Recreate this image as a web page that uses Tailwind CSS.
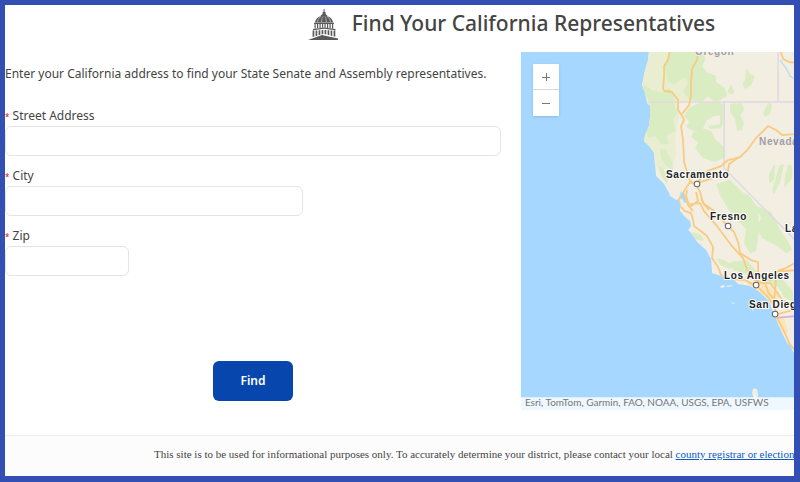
<!DOCTYPE html>
<html lang="en">
  <head>
    <meta charset="UTF-8" />
    <meta name="viewport" content="width=device-width, initial-scale=1.0" />
    <title>Find Your California Representatives</title>
    <script src="https://cdn.jsdelivr.net/npm/@tailwindcss/browser@4"></script>
  </head>
  <body
    class="flex min-h-screen flex-col overflow-hidden border-t-5 border-r-6 border-b-6 border-l-5 border-[#344fb3] bg-white font-['Noto_Sans','Open_Sans',sans-serif] text-[#444]"
  >
    <header class="flex items-center justify-center gap-3 pb-1 pl-56">
      <svg class="mt-1 h-8 w-8" viewBox="0 0 32 32" fill="#5a5a5a" aria-hidden="true">
        <path d="M15.6 0h1v3h-1zM14.6 3h3v3h-3z" />
        <path d="M12.500 7c.6-1.300 2-2 3.500-2s2.900.7 3.500 2z" />
        <path d="M7 13.500C7.500 9.500 11.300 6.800 16 6.800s8.500 2.700 9 6.700z" />
        <path d="M6 13.700h20v1.300H6zM5 20l11-1.500L27.500 20v1.200L16 19.800 5 21.200z" />
        <path d="M6.500 15h1.200v4.400H6.500zM9 15h1.200v4.200H9zM11.500 15h1.200v4h-1.200zM14 15h1.200v3.800H14zM16.500 15h1.200v3.800h-1.200zM19 15h1.200v4H19zM21.500 15h1.200v4.200h-1.200zM24 15h1.200v4.400H24z" />
        <path d="M4.600 21.600h1.700v6l-1.700.5zM7.600 21.400h1.700v5.400l-1.700.5zM10.600 21.200h1.700v4.600l-1.700.5zM13.600 21h1.700v4l-1.700.4zM16.600 21h1.700v4.500l-1.700-.4zM19.600 21.200h1.700v5l-1.700-.5zM22.600 21.400h1.700v5.600l-1.700-.5zM25.600 21.600h1.700v6.200l-1.700-.5z" />
        <path d="M0 31L14 26l16 3.500V31z" />
        <path d="M9.500 13c.4-2.500 1.400-4.500 3.500-5.600M13.500 13c0-2.500.7-4.500 1.700-5.600M18.300 13c0-2.500-.4-4.500-1.300-5.600M22.500 13c-.5-2.500-1.500-4.500-3.500-5.600" fill="none" stroke="#ccc" stroke-width=".7" />
      </svg>
      <h1 class="text-[21px] leading-9 font-medium whitespace-nowrap">Find Your California Representatives</h1>
    </header>

    <main class="mt-[7px] grid grid-cols-[17fr_9fr]">
      <form class="flex min-w-0 flex-col pr-5 text-xs leading-5">
        <p class="mt-3 mb-[22px] whitespace-nowrap">
          Enter your California address to find your State Senate and Assembly representatives.
        </p>
        <label for="street"><span class="text-[8px] leading-none text-red-600">*</span> Street Address</label>
        <input id="street" type="text" required class="mb-2.5 h-[30px] w-full rounded-md border border-[#e4e4e4] px-2" />
        <label for="city"><span class="text-[8px] leading-none text-red-600">*</span> City</label>
        <input id="city" type="text" required class="mb-2.5 h-[30px] w-3/5 rounded-md border border-[#e4e4e4] px-2" />
        <label for="zip"><span class="text-[8px] leading-none text-red-600">*</span> Zip</label>
        <input id="zip" type="text" required class="h-[30px] w-1/4 rounded-md border border-[#e4e4e4] px-2" />
        <button type="submit" class="mt-[85px] h-10 w-20 self-center rounded-md bg-[#0747ad] text-xs font-semibold text-white">
          Find
        </button>
      </form>

      <section class="relative h-[358px] min-w-0 overflow-hidden bg-[#a6d7ff]" aria-label="Map of California">
        <svg class="h-full w-full" viewBox="521 52 273 358" preserveAspectRatio="xMinYMin slice" fill="none">
          <defs>
            <clipPath id="land">
              <path id="coast" d="M649 50L648 60 645 70 643 80 642 85 645 93 647 103 650 106 650 117 649 126 645 135 644 141 650 147 654 153 655 165 656 176 664 184 669 193 670 196 676 200 679 199 680 204 680 211 685 217 690 221 691 226 688 230 692 234 697 242 706 250 711 259 712 273 721 276 732 278 738 284 750 286 757 290 765 297 770 303 772 310 775 315 777 322 783 335 787 343 791 347 793 352 796 354V50z" />
            </clipPath>
          </defs>
          <use href="#coast" fill="#f3eee2" />
          <g clip-path="url(#land)">
            <path d="M640 50h57l-5 20-3 32-13 2 3 12-4 20 1 20-6 14-18-4-12-30 4-20z" fill="#e9eed0" />
            <g fill="#daecc2">
              <path d="M671 50h32l2 10-3 6 4 6 10 4 0 6 9 6 2 8-7 4-6 2-6-6-6 6-12-2-7-8 5-10-4-4-10 6-6-2-4-18z" />
              <path d="M643 84l8 6 10 2 8-4 6 8-2 7-22 0-6-8z" />
              <path d="M650 103h24l4 10-5 6 2 12-9 5 3 8-8 0-6-8-7 2-2-8 4-10z" />
              <path d="M689 108l10-5h22l2 12-9 1-7 4-5 10-8 1-8-4 3-5-5-6z" />
              <path d="M720 104h3v20l-3 4zM708 126l12-2 2 4-12 1z" />
              <path d="M693 132l8-4 10 3 4 8 9 8 1 10-10 5-12-4-8-10 3-5-7-6z" />
              <path d="M660 148l6 2 6 12 1 8-6-3-6-9z" />
              <path d="M716 184l14-4 12 12 8 4 8 13 1 22-3 20-6 2-6-10 2-14-8-8-10-12-8-14z" />
              <path d="M754 205l17 7 8 16 8 12 5 10-6 3-11-8-13-7-5-10 4-10z" />
              <path d="M658 166l5 2 5 10-1 6-6-8z" />
              <path d="M692 232l8 2 4 6-2 1-7-2zM716 258l8 2 10 6-4 3-10-4z" />
              <path d="M730 262l17-2 8 10 12 8-8 2-14-6-12-4z" />
              <path d="M761 275l13-1 11 8 7 8 2 12-9-4-7-11-15-6z" />
              <path d="M730 104l12-1 2 7-4 5 4 8-2 7-5 1-2-12-5-7z" />
              <path d="M768 103l4 2-2 9-5 3-2-4zM746 68l4 6 5 2-4 9-6 4-3-5 3-4zM731 84l3 7-1 3-6-1z" />
              <path d="M772 168l3-4-1 16-5 4 0-10zM779 166l5-2-4 18-6 12-2-3zM788 164l4 2v12l-8 10 1-12z" />
            </g>
            <path d="M748 283l13-3 9 8 9 8-3 9-9-6-8-7-9-3zM775 316l9 2 4 14-5 3z" fill="#fae6b8" />
            <g stroke="#dfd9e2" stroke-width="1.500">
              <path d="M648 102H796M778 50V102M724 102V168L796 241" />
              <path d="M775 318L796 316" stroke="#d9b5dc" stroke-width="2" />
            </g>
            <path d="M780 60L787 70 790 76 796 80" stroke="#bfe0e8" stroke-width="1.500" />
            <g stroke="#f8cb83" stroke-width="1.800" stroke-linejoin="round">
              <path d="M670 50L668 60 664 66 664 77 663 89 665 91 672 92 678 100 678 110 682 116 684 120 681 126 683 140 684 162 687 172 690 181 696 184 700 192 703 203 714 211 724 222 734 232 738 242 740 253 751 260 758 262 758 288" />
              <path d="M698 50L697 60 692 69 691 83 691 95 689 105 682 114" />
              <path d="M696 184L707 171 721 166 728 160 740 157 748 149 756 138 768 126 776 130 782 135 796 134" />
              <path d="M700 182L713 178 727 175 729 164 739 157" />
              <path d="M697 185L690 182 684 191 679 199 680 206 685 211 691 213 693 220 694 226 707 236 713 247 712 258 718 267 721 275 731 279 745 280 756 286" />
              <path d="M687 190L686 196 688 202 691 206 698 201 696 192M691 204L700 203 704 211 716 225 731 245 743 258 747 270 756 276" />
              <path d="M681 199L684 194 688 205 693 211M701 198L704 204 709 210" />
              <path d="M756 276L771 280 777 271 786 268 796 262M775 271L783 271 796 270" />
              <path d="M751 278L762 283 770 283 776 291 782 300 796 307M758 287L767 296 774 306 778 320 784 331 789 343 796 352" />
              <path d="M776 274L775 292 773 304M765 282L768 292 776 302M778 314L796 309" />
              <path d="M780 50L783 59 789 62 796 63" />
            </g>
          </g>
          <path d="M680 193l3-1 3 10-2 1z" fill="#a6d7ff" />
          <g fill="#f4efe1">
            <path d="M720 286l4-1 1 2-4 1zM726 286l6-1v1l-5 1zM731 302l4 1-2 1zM751 299l4 4-3-1zM751 306l3 6-2-2zM753 388l4 1 1 6-1 4h-3l-2-6z" />
          </g>
          <path d="M521 397h273v13h-273z" fill="#fff" fill-opacity=".82" />
          <g
            class="font-['Liberation_Sans',Arial,sans-serif]"
            font-size="10"
            font-weight="700"
            fill="#222"
            stroke="#fff"
            stroke-width="2"
            stroke-linejoin="round"
            paint-order="stroke"
            letter-spacing=".6"
          >
            <text x="666" y="178">Sacramento</text>
            <text x="710" y="220">Fresno</text>
            <text x="785" y="232">Las Vegas</text>
            <text x="724" y="279">Los Angeles</text>
            <text x="749" y="308">San Diego</text>
            <g fill="#a39da8" stroke="#f3eee2">
              <text x="695" y="55">Oregon</text>
              <text x="759" y="145">Nevada</text>
            </g>
          </g>
          <g fill="#fff" stroke="#666" stroke-width="1">
            <circle cx="697" cy="184" r="2.800" />
            <circle cx="728" cy="226" r="2.800" />
            <circle cx="756" cy="285" r="2.800" />
            <circle cx="775" cy="314" r="2.800" />
          </g>
        </svg>
        <div class="absolute top-3 left-3 flex w-[26px] flex-col divide-y divide-gray-300 bg-white shadow">
          <button type="button" aria-label="Zoom in" class="flex h-[26px] items-center justify-center">
            <svg class="h-4 w-4" viewBox="0 0 16 16" stroke="#777"><path d="M4 8.500h8M8.500 4v8" /></svg>
          </button>
          <button type="button" aria-label="Zoom out" class="flex h-[26px] items-center justify-center">
            <svg class="h-4 w-4" viewBox="0 0 16 16" stroke="#777"><path d="M4 8.500h8" /></svg>
          </button>
        </div>
        <p class="absolute bottom-0.5 left-1 font-['Lato',sans-serif] text-[10px] leading-3 whitespace-nowrap text-[#777]">
          Esri, TomTom, Garmin, FAO, NOAA, USGS, EPA, USFWS
        </p>
      </section>
    </main>

    <footer
      class="mt-[25px] grow overflow-hidden border-t border-[#ececec] bg-[#fcfcfc] pt-2.5 pl-[149px] font-['Liberation_Serif',serif] text-[11px] leading-4 whitespace-nowrap"
    >
      This site is to be used for informational purposes only. To accurately determine your district, please contact your local
      <a href="#" class="text-[#0b57c4] underline">county registrar or elections office</a>
    </footer>
  </body>
</html>
